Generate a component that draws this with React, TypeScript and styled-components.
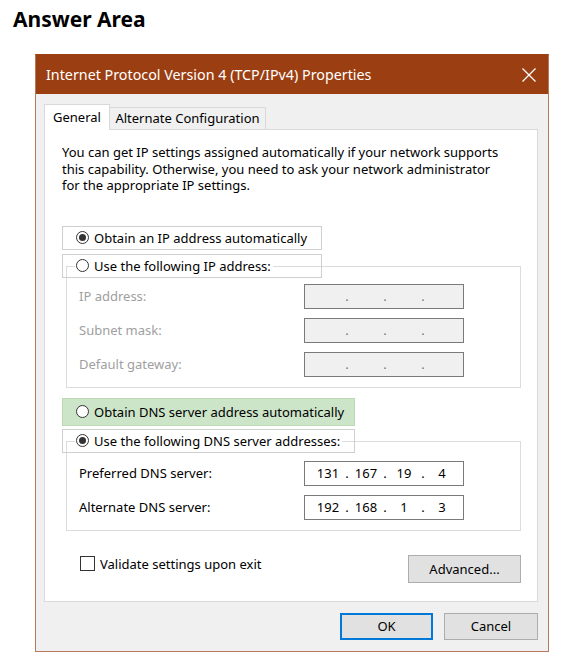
import React from 'react';
import styled, { createGlobalStyle } from 'styled-components';

const GlobalStyle = createGlobalStyle`
  body {
    margin: 0;
    background: #fff;
    font-family: "Noto Sans", "Open Sans", sans-serif;
    color: #000;
  }
`;

const Page = styled.div`
  width: 562px;
  height: 666px;
  box-sizing: border-box;
  padding: 5px 0 0 13px;
`;

const Heading = styled.h1`
  margin: 0;
  font-size: 21px;
  line-height: 28px;
  font-weight: 700;
  color: #000;
`;

const Dialog = styled.div`
  margin: 21px 0 0 22px;
  width: 514px;
  box-sizing: border-box;
  border: 1px solid #b9795b;
  border-top-color: #9b3e12;
  background: #f0f0f0;
  font-size: 13px;
`;

const TitleBar = styled.div`
  height: 39px;
  display: flex;
  align-items: center;
  justify-content: space-between;
  padding: 0 12px 0 10px;
  background: #9b3e12;
  color: #fff;
  font-size: 14.3px;
`;

const Body = styled.div`
  padding: 10px 10px 11px 8px;
`;

const TabBar = styled.div`
  display: flex;
  align-items: flex-end;
  position: relative;
  z-index: 1;
`;

const Tab = styled.div<{ $active?: boolean; $width: number }>`
  box-sizing: border-box;
  width: ${(p) => p.$width}px;
  height: ${(p) => (p.$active ? 26 : 22)}px;
  margin-bottom: ${(p) => (p.$active ? -1 : 0)}px;
  padding-top: ${(p) => (p.$active ? 1 : 0)}px;
  border: 1px solid #d9d9d9;
  border-bottom: none;
  border-left-width: ${(p) => (p.$active ? 1 : 0)}px;
  background: ${(p) => (p.$active ? '#fff' : '#f0f0f0')};
  line-height: ${(p) => (p.$active ? 22 : 21)}px;
  text-align: center;
`;

const Panel = styled.div`
  background: #fff;
  border: 1px solid #d9d9d9;
  padding: 14px 16px 18px 17px;
`;

const Intro = styled.p`
  margin: 0 0 32px;
  line-height: 16.5px;
  white-space: nowrap;
`;

const OptionFrame = styled.div<{ $width: number; $top?: number; $highlight?: boolean }>`
  box-sizing: border-box;
  width: ${(p) => p.$width}px;
  height: ${(p) => (p.$highlight ? 28 : 24)}px;
  margin-top: ${(p) => p.$top ?? 0}px;
  display: flex;
  align-items: center;
  padding-left: 13px;
  border: 1px solid ${(p) => (p.$highlight ? '#bcd8b7' : '#cfcfcf')};
  background: ${(p) => (p.$highlight ? '#cce4c8' : 'transparent')};
  white-space: nowrap;
`;

const LegendFrame = styled(OptionFrame)<{ $below: number }>`
  margin: -13px 0 ${(p) => p.$below}px -5px;
  padding-left: 12px;
`;

const LegendLabel = styled.span`
  display: inline-flex;
  align-items: center;
  padding: 0 2px 0 1px;
  background: #fff;
  line-height: 18px;
`;

const Radio = styled.span<{ $checked?: boolean }>`
  box-sizing: border-box;
  flex: none;
  width: 13px;
  height: 13px;
  margin-right: 5px;
  border-radius: 50%;
  border: 1px solid #333;
  background: #fff;
  display: inline-flex;
  align-items: center;
  justify-content: center;

  &::after {
    content: '';
    display: ${(p) => (p.$checked ? 'block' : 'none')};
    width: 7px;
    height: 7px;
    border-radius: 50%;
    background: #333;
  }
`;

const Group = styled.div<{ $top: number }>`
  margin: ${(p) => p.$top}px 0 0 4px;
  border: 1px solid #dcdcdc;
  padding-bottom: 10px;
`;

const Fields = styled.div`
  display: flex;
  flex-direction: column;
  gap: 9px;
  padding: 0 12px;
`;

const FieldRow = styled.div<{ $disabled?: boolean }>`
  display: flex;
  align-items: center;
  height: 25px;
  color: ${(p) => (p.$disabled ? '#a0a0a0' : '#000')};
`;

const FieldLabel = styled.span`
  width: 225px;
`;

const IpBox = styled.div<{ $disabled?: boolean }>`
  box-sizing: border-box;
  width: 160px;
  height: 25px;
  display: flex;
  align-items: center;
  padding-left: 6px;
  border: 1px solid #7a7a7a;
  background: ${(p) => (p.$disabled ? '#f0f0f0' : '#fff')};
  color: ${(p) => (p.$disabled ? '#777' : '#000')};
`;

const Octet = styled.span`
  width: 34px;
  text-align: center;
`;

const Dot = styled.span`
  width: 4px;
  text-align: center;
`;

const OptionsRow = styled.div`
  display: flex;
  justify-content: space-between;
  align-items: flex-start;
  margin-top: 24px;
`;

const CheckLabel = styled.label`
  display: flex;
  align-items: center;
  gap: 5px;
  height: 16px;
  margin: 1px 0 0 18px;
`;

const CheckBox = styled.span`
  box-sizing: border-box;
  width: 15px;
  height: 15px;
  border: 1px solid #333;
  background: #fff;
`;

const Button = styled.button<{ $width: number; $height: number; $default?: boolean }>`
  box-sizing: border-box;
  width: ${(p) => p.$width}px;
  height: ${(p) => p.$height}px;
  padding: 0;
  font: inherit;
  color: #000;
  background: #e1e1e1;
  border: ${(p) => (p.$default ? '2px solid #0078d7' : '1px solid #adadad')};
`;

const Footer = styled.div`
  display: flex;
  justify-content: flex-end;
  gap: 11px;
  margin-top: 11px;
`;

const CloseIcon = () => (
  <svg width="14" height="14" viewBox="0 0 14 14">
    <path d="M0.5 0.5 L13.5 13.5 M13.5 0.5 L0.5 13.5" stroke="#fff" strokeWidth="1.3" />
  </svg>
);

const IpField: React.FC<{ value?: string[]; disabled?: boolean }> = ({ value = ['', '', '', ''], disabled }) => (
  <IpBox $disabled={disabled}>
    {value.map((v, i) => (
      <React.Fragment key={i}>
        {i > 0 && <Dot>.</Dot>}
        <Octet>{v}</Octet>
      </React.Fragment>
    ))}
  </IpBox>
);

export default function App() {
  return (
    <Page>
      <GlobalStyle />
      <Heading>Answer Area</Heading>
      <Dialog>
        <TitleBar>
          <span>Internet Protocol Version 4 (TCP/IPv4) Properties</span>
          <CloseIcon />
        </TitleBar>
        <Body>
          <TabBar>
            <Tab $active $width={66}>General</Tab>
            <Tab $width={156}>Alternate Configuration</Tab>
          </TabBar>
          <Panel>
            <Intro>
              You can get IP settings assigned automatically if your network supports
              <br />
              this capability. Otherwise, you need to ask your network administrator
              <br />
              for the appropriate IP settings.
            </Intro>

            <OptionFrame $width={260}>
              <Radio $checked />
              Obtain an IP address automatically
            </OptionFrame>
            <Group $top={16}>
              <LegendFrame $width={260} $below={6}>
                <LegendLabel>
                  <Radio />
                  Use the following IP address:
                </LegendLabel>
              </LegendFrame>
              <Fields>
                <FieldRow $disabled>
                  <FieldLabel>IP address:</FieldLabel>
                  <IpField disabled />
                </FieldRow>
                <FieldRow $disabled>
                  <FieldLabel>Subnet mask:</FieldLabel>
                  <IpField disabled />
                </FieldRow>
                <FieldRow $disabled>
                  <FieldLabel>Default gateway:</FieldLabel>
                  <IpField disabled />
                </FieldRow>
              </Fields>
            </Group>

            <OptionFrame $width={293} $top={10} $highlight>
              <Radio />
              Obtain DNS server address automatically
            </OptionFrame>
            <Group $top={15}>
              <LegendFrame $width={293} $below={8}>
                <LegendLabel>
                  <Radio $checked />
                  Use the following DNS server addresses:
                </LegendLabel>
              </LegendFrame>
              <Fields>
                <FieldRow>
                  <FieldLabel>Preferred DNS server:</FieldLabel>
                  <IpField value={['131', '167', '19', '4']} />
                </FieldRow>
                <FieldRow>
                  <FieldLabel>Alternate DNS server:</FieldLabel>
                  <IpField value={['192', '168', '1', '3']} />
                </FieldRow>
              </Fields>
            </Group>

            <OptionsRow>
              <CheckLabel>
                <CheckBox />
                Validate settings upon exit
              </CheckLabel>
              <Button $width={113} $height={28}>Advanced...</Button>
            </OptionsRow>
          </Panel>
          <Footer>
            <Button $width={93} $height={27} $default>OK</Button>
            <Button $width={94} $height={27}>Cancel</Button>
          </Footer>
        </Body>
      </Dialog>
    </Page>
  );
}
